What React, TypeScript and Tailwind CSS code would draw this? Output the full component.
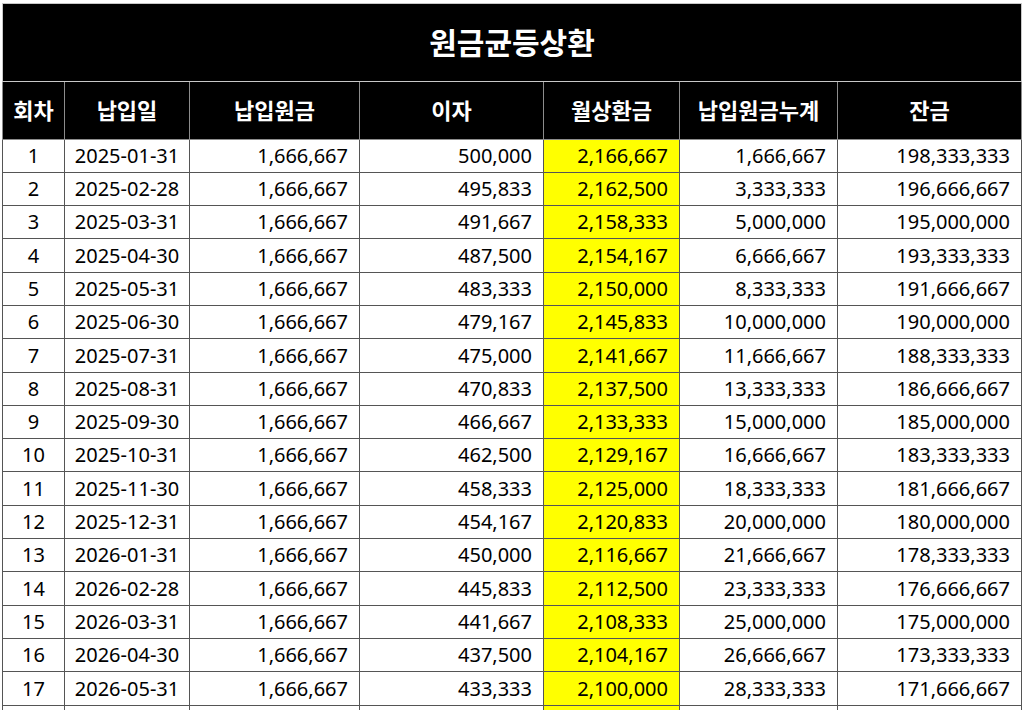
// 원금균등상환 schedule - spreadsheet style table
const PRINCIPAL = 200000000;
const MONTHS = 120;
const RATE = 0.03 / 12;

interface Row {
  no: number;
  date: string;
  principal: number;
  interest: number;
  payment: number;
  paidTotal: number;
  balance: number;
}

function buildRows(count: number): Row[] {
  const rows: Row[] = [];
  const monthly = PRINCIPAL / MONTHS;
  for (let i = 0; i < count; i++) {
    const before = PRINCIPAL - monthly * i;
    const interest = before * RATE;
    const d = new Date(Date.UTC(2025, i + 1, 0));
    const date = `${d.getUTCFullYear()}-${String(d.getUTCMonth() + 1).padStart(2, '0')}-${String(d.getUTCDate()).padStart(2, '0')}`;
    rows.push({
      no: i + 1,
      date,
      principal: Math.round(monthly),
      interest: Math.round(interest),
      payment: Math.round(monthly + interest),
      paidTotal: Math.round(monthly * (i + 1)),
      balance: Math.round(PRINCIPAL - monthly * (i + 1)),
    });
  }
  return rows;
}

const fmt = (n: number) => n.toLocaleString('en-US');

const headers = ['회차', '납입일', '납입원금', '이자', '월상환금', '납입원금누계', '잔금'];

const GRID = 'grid grid-cols-[62px_125px_170px_184px_136px_158px_184px]';
const CELL = 'flex items-center border-r border-b border-[#555555] text-[20px] text-black';

export default function App() {
  const rows = buildRows(17);
  return (
    <div
      className="w-[1024px] h-[710px] overflow-hidden bg-white pl-[2px] pt-[3px]"
      style={{ fontFamily: '"Noto Sans", "Noto Sans CJK KR", sans-serif' }}
    >
      <div className="w-[1020px]">
        <div className="h-[79px] bg-black border border-[#c8c8c8] flex items-center justify-center">
          <span className="text-white text-[30px] font-bold">원금균등상환</span>
        </div>
        <div className={`${GRID} h-[58px] bg-black border-l border-b border-[#8c8c8c]`}>
          {headers.map((h) => (
            <div key={h} className="flex items-center justify-center text-white text-[22px] font-bold border-r border-[#8c8c8c]">
              {h}
            </div>
          ))}
        </div>
        <div className="border-l border-[#555555]">
          {rows.map((r, i) => {
            const tall = Math.floor(((i + 1) * 566) / 17) - Math.floor((i * 566) / 17) === 34;
            return (
              <div key={r.no} className={`${GRID} ${tall ? 'h-[34px]' : 'h-[33px]'}`}>
                <div className={`${CELL} justify-center`}>{r.no}</div>
                <div className={`${CELL} justify-center`}>{r.date}</div>
                <div className={`${CELL} justify-end pr-[11px]`}>{fmt(r.principal)}</div>
                <div className={`${CELL} justify-end pr-[11px]`}>{fmt(r.interest)}</div>
                <div className={`${CELL} justify-end pr-[11px] bg-[#ffff00]`}>{fmt(r.payment)}</div>
                <div className={`${CELL} justify-end pr-[11px]`}>{fmt(r.paidTotal)}</div>
                <div className={`${CELL} justify-end pr-[11px]`}>{fmt(r.balance)}</div>
              </div>
            );
          })}
          {/* next row, only its top edge shows in the window */}
          <div className={`${GRID} h-[33px]`}>
            <div className={CELL} />
            <div className={CELL} />
            <div className={CELL} />
            <div className={CELL} />
            <div className={`${CELL} bg-[#ffff00]`} />
            <div className={CELL} />
            <div className={CELL} />
          </div>
        </div>
      </div>
    </div>
  );
}
